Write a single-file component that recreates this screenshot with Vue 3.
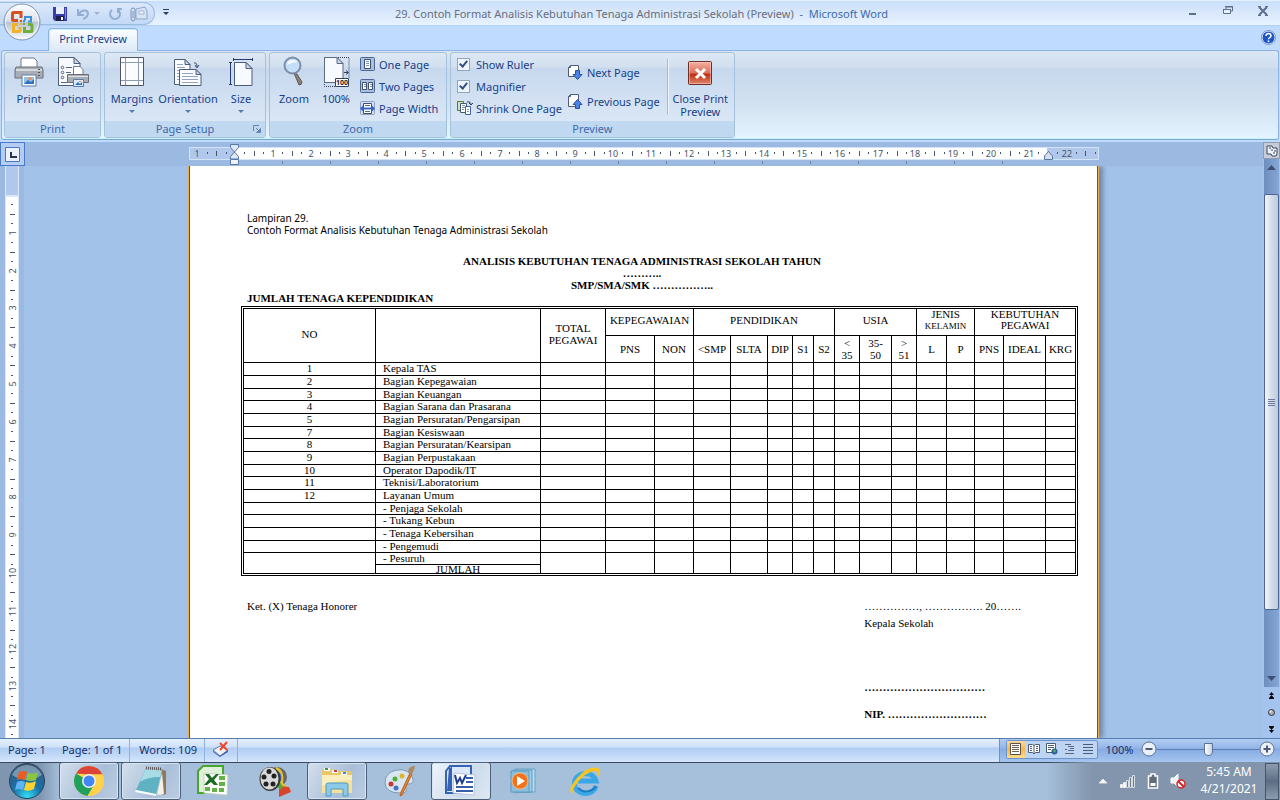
<script setup>
import { ref } from 'vue';

const showRuler = ref(true);
const magnifier = ref(true);
const zoom = ref(100);

const CM = 37.8;

// horizontal ruler: zero sits 46px from its left edge
const hNumbers = [-1, ...Array.from({ length: 22 }, (_, i) => i + 1)].map((n) => ({
  label: Math.abs(n),
  pos: Math.round(46 + n * CM),
}));
const quarter = (from, to, zero) => {
  const list = [];
  for (let q = from; q <= to; q += 1) {
    if (q % 4 !== 0) {
      list.push({ pos: Math.round(zero + (q * CM) / 4), half: q % 2 === 0 });
    }
  }
  return list;
};
const hTicks = quarter(-3, 91, 46);
const tabStops = Array.from({ length: 16 }, (_, i) => 93 + i * 48);

// vertical ruler
const vNumbers = Array.from({ length: 14 }, (_, i) => ({
  label: i + 1,
  pos: Math.round(29 + (i + 1) * CM),
}));
const vTicks = quarter(1, 57, 29);

const columns = [131, 165, 65, 49, 39, 37, 37, 25, 21, 21, 25, 32, 25, 30, 28, 29, 42, 30];

const subHeads = [
  'PNS', 'NON', '<SMP', 'SLTA', 'DIP', 'S1', 'S2', '<\n35', '35-\n50', '>\n51', 'L', 'P', 'PNS', 'IDEAL', 'KRG',
];

const rows = [
  ['1', 'Kepala TAS'],
  ['2', 'Bagian Kepegawaian'],
  ['3', 'Bagian Keuangan'],
  ['4', 'Bagian Sarana dan Prasarana'],
  ['5', 'Bagian Persuratan/Pengarsipan'],
  ['7', 'Bagian Kesiswaan'],
  ['8', 'Bagian Persuratan/Kearsipan'],
  ['9', 'Bagian Perpustakaan'],
  ['10', 'Operator Dapodik/IT'],
  ['11', 'Teknisi/Laboratorium'],
  ['12', 'Layanan Umum'],
  ['', '- Penjaga Sekolah'],
  ['', '- Tukang Kebun'],
  ['', '- Tenaga Kebersihan'],
  ['', '- Pengemudi'],
];
</script>

<template>
  <div class="desktop">
    <header class="titlebar">
      <div class="quick">
        <button class="quick-button" aria-label="Save">
          <svg width="14" height="14" viewBox="0 0 14 14">
            <path d="M0 0h14v14H2L0 12z" fill="#3a3fa8" />
            <path d="M3 0h8v7H3z" fill="#e8effc" />
            <path d="M3 9h8v5H3z" fill="#1d2050" />
            <path d="M8 10h2v3H8z" fill="#fff" />
            <path d="M12 1h1v11h-1z" fill="#7b8ee0" />
          </svg>
        </button>
        <button class="quick-button undo" aria-label="Undo">
          <svg width="24" height="14" viewBox="0 0 24 14">
            <path d="M2 2v6h6M3 7c2-4 8-5 9-1 0 3-2 5-5 6" fill="none" stroke="#93aed3" stroke-width="2" />
            <path d="M18 5h6l-3 3z" fill="#a5b3c7" />
          </svg>
        </button>
        <button class="quick-button" aria-label="Repeat">
          <svg width="14" height="14" viewBox="0 0 14 14">
            <path d="M4 3a5 5 0 1 0 6 0M10 6V2h4" fill="none" stroke="#93aed3" stroke-width="2" />
          </svg>
        </button>
        <button class="quick-button" aria-label="Attach">
          <svg width="18" height="16" viewBox="0 0 18 16">
            <path d="M6 3l9-2 2 4v8H6z" fill="#d7e4f5" stroke="#8da6c7" />
            <path d="M9 5h5v3H9z" fill="#f3f8ff" stroke="#9db3d0" />
            <path d="M1 12V4q0-2 2-2t2 2v9q0 2-2 2t-2-3M3 5v7" fill="none" stroke="#8095b5" />
          </svg>
        </button>
      </div>
      <button class="quick-more" aria-label="Customize Quick Access Toolbar">
        <svg width="6" height="6" viewBox="0 0 6 6">
          <path d="M0 0h6v1H0zM0 3h6L3 6z" fill="#2b3f6b" />
        </svg>
      </button>
      <h1 class="window-title">
        29. Contoh Format Analisis Kebutuhan Tenaga Administrasi Sekolah (Preview)
        <span class="app-name">&nbsp;-&nbsp; Microsoft Word</span>
      </h1>
      <div class="window-buttons">
        <button aria-label="Minimize">
          <svg width="10" height="10" viewBox="0 0 10 10">
            <path d="M1 7h7v2H1z" fill="#5d6f8c" />
          </svg>
        </button>
        <button aria-label="Restore">
          <svg width="10" height="10" viewBox="0 0 10 10">
            <path d="M3 3V1h6.500v4H7" fill="none" stroke="#5d6f8c" />
            <path d="M.5 3.500h7v4h-7z" fill="#e9f2fe" stroke="#5d6f8c" />
            <path d="M0 3h8v1H0zM2 0h8v1H2z" fill="#5d6f8c" />
          </svg>
        </button>
        <button aria-label="Close">
          <svg width="10" height="10" viewBox="0 0 10 10">
            <path d="M1 1l8 8M9 1L1 9" stroke="#5d6f8c" stroke-width="2" />
            <path d="M0 .5h3M7 .5h3M0 9.500h3M7 9.500h3" stroke="#5d6f8c" />
          </svg>
        </button>
      </div>
      <button class="office" aria-label="Office Button">
        <svg width="38" height="38" viewBox="0 0 38 38">
          <defs>
            <linearGradient id="orb" x1="0" y1="0" x2="0" y2="1">
              <stop offset="0" stop-color="#fdfeff" />
              <stop offset=".48" stop-color="#d9e0ea" />
              <stop offset=".5" stop-color="#b6c2d3" />
              <stop offset="1" stop-color="#f8fbff" />
            </linearGradient>
          </defs>
          <circle cx="19" cy="19" r="18" fill="url(#orb)" stroke="#7f93b2" />
          <circle cx="19" cy="19" r="16.500" fill="none" stroke="#fff" opacity=".7" />
          <path d="M18 15V9.500h-7.500q-1 0-1 1v6q0 1 1 1H15" fill="none" stroke="#d8501c" stroke-width="3" />
          <path d="M22 17.500v-3.500h6v4.500h-3" fill="none" stroke="#3f8fd6" stroke-width="2" />
          <path d="M15 21.500h-4.500v7H16q1 0 1-1V24" fill="none" stroke="#f0b323" stroke-width="3" />
          <path d="M21.500 24v4.500h6.500q1 0 1-1v-5q0-1-1-1h-3" fill="none" stroke="#6fae3b" stroke-width="3" />
          <path d="M17 17h2v2h-2z" fill="#d8501c" />
          <path d="M20 17h2v2h-2z" fill="#3f8fd6" />
          <path d="M17 20h2v2h-2z" fill="#f0b323" />
          <path d="M20 20h2v2h-2z" fill="#6fae3b" />
        </svg>
      </button>
    </header>

    <nav class="tabs">
      <button class="tab">Print Preview</button>
      <button class="help" aria-label="Help">
        <svg width="15" height="15" viewBox="0 0 15 15">
          <circle cx="7.500" cy="7.500" r="6.500" fill="#1c57c9" stroke="#fff" />
          <circle cx="7.500" cy="7.500" r="7" fill="none" stroke="#6d8fc9" />
          <path d="M5 6q0-2.500 2.500-2.500T10 6q0 1-1.500 1.800-1 .5-1 1.500" fill="none" stroke="#fff" stroke-width="1.500" />
          <path d="M6.700 10.500h1.600V12H6.700z" fill="#fff" />
        </svg>
      </button>
    </nav>

    <div class="ribbon">
      <section class="group print">
        <div class="tools">
          <button class="big">
            <svg width="32" height="32" viewBox="0 0 32 32">
              <path d="M9 2h12l3 3v9H8V3z" fill="#fff" stroke="#6b7a90" />
              <path d="M3 11h26l1 3v8H2v-8z" fill="#a9adb5" stroke="#6c6f77" />
              <path d="M3 13h26v2H3z" fill="#d6d9de" />
              <path d="M25 13h2v1h-2zM25 16h2v1h-2zM25 19h2v1h-2z" fill="#555" />
              <path d="M9 19h14v11H9z" fill="#fff" stroke="#5b7ba8" />
              <path d="M11 21h10v7H11z" fill="#8fc0f0" />
              <path d="M11 28l4-4 3 2 3-3v5z" fill="#2f70c0" />
              <circle cx="17" cy="22.500" r="1.500" fill="#f08a3c" />
            </svg>
            <span>Print</span>
          </button>
          <button class="big">
            <svg width="32" height="32" viewBox="0 0 32 32">
              <path d="M1.500 1.500H17l6 6v22H1.500z" fill="#f7faff" stroke="#4d5d78" />
              <path d="M17 1.500v6h6z" fill="#cdd9ea" stroke="#4d5d78" />
              <g fill="none" stroke="#55637c">
                <circle cx="5.500" cy="11.500" r="1.300" />
                <circle cx="5.500" cy="16.500" r="1.300" />
                <circle cx="5.500" cy="21.500" r="1.300" />
                <path d="M9 11.500h6M9 16.500h5M4 26.500h6" />
              </g>
              <path d="M16.500 10.500H23l3 3v6h-9.500z" fill="#fff" stroke="#6b7a90" />
              <path d="M10.500 18.500h21v8h-21z" fill="#a9adb5" stroke="#6c6f77" />
              <path d="M11 20h20v1H11z" fill="#dfe2e6" />
              <path d="M16.500 23.500h10v7h-10z" fill="#dbeafd" stroke="#5b7ba8" />
              <path d="M18 29l3-3 2 2 2-2v3z" fill="#2f70c0" />
              <path d="M22 25h2v1h-2z" fill="#f08a3c" />
            </svg>
            <span>Options</span>
          </button>
        </div>
        <h2>Print</h2>
      </section>

      <section class="group">
        <div class="tools">
          <button class="big margins">
            <svg width="32" height="32" viewBox="0 0 32 32">
              <path d="M4.500 1.500h23v28h-23z" fill="#fafcff" stroke="#4f5560" />
              <path d="M9.500 2v27M22.500 2v27M5 6.500h22M5 24.500h22" stroke="#8c9bb2" />
            </svg>
            <span>Margins</span>
            <i class="arrow"></i>
          </button>
          <button class="big orientation">
            <svg width="32" height="32" viewBox="0 0 32 32">
              <path d="M2.500 3.500H13l5 5v20H2.500z" fill="#fafcff" stroke="#4d5d78" />
              <path d="M13 3.500v5h5z" fill="#cdd9ea" stroke="#4d5d78" />
              <path d="M5 8.500h6M5 11.500h8M5 14.500h4M5 17.500h3M5 20.500h3M5 23.500h3" stroke="#8fa4c6" />
              <path d="M7.500 13.500H24l5 5v11H7.500z" fill="#fafcff" stroke="#4d5d78" />
              <path d="M24 13.500v5h5z" fill="#cdd9ea" stroke="#4d5d78" />
              <path d="M10 17.500h11M10 20.500h16M10 23.500h16M10 26.500h16" stroke="#8fa4c6" />
              <path d="M22 7q3-1 3 4M23 9l2 3 2-3" fill="none" stroke="#3c4b6e" />
            </svg>
            <span>Orientation</span>
            <i class="arrow"></i>
          </button>
          <button class="big">
            <svg width="32" height="32" viewBox="0 0 32 32">
              <path d="M9.500 6.500H21l6 6v17H9.500z" fill="#f7faff" stroke="#4d5d78" />
              <path d="M21 6.500v6h6z" fill="#cdd9ea" stroke="#4d5d78" />
              <path d="M9 3.500h18M8.500 2v3M27.500 2v3M5.500 7v21M4 6.500h3M4 28.500h3" stroke="#27377c" />
            </svg>
            <span>Size</span>
            <i class="arrow"></i>
          </button>
        </div>
        <h2>
          Page Setup
          <button class="launcher" aria-label="Page Setup dialog">
            <svg width="8" height="8" viewBox="0 0 8 8">
              <path d="M.5 6V.5H6" fill="none" stroke="#6785b3" />
              <path d="M3 3l3 3M7.500 3.500v4h-4z" fill="#6785b3" stroke="#6785b3" />
            </svg>
          </button>
        </h2>
      </section>

      <section class="group">
        <div class="tools">
          <button class="big">
            <svg width="32" height="32" viewBox="0 0 32 32">
              <path d="M16 17l3 1 5 8q0 3-3 3z" fill="#8a8078" stroke="#5f5a58" />
              <circle cx="14.500" cy="9.500" r="8" fill="#c5def7" stroke="#7c8da5" stroke-width="2" />
              <path d="M9 9q0-5 6-5 3 0 5 2-6 0-11 3z" fill="#f3f9ff" />
            </svg>
            <span>Zoom</span>
          </button>
          <button class="big hundred">
            <svg width="32" height="32" viewBox="0 0 32 32">
              <path d="M4 1.500h25V22M4.500 2v28.500H15" fill="none" stroke="#33415e" stroke-dasharray="1 1" />
              <path d="M4.500 1.500H17l6 6v19H4.500z" fill="#f7faff" stroke="#5c6b84" />
              <path d="M17 1.500v6h6z" fill="#cdd9ea" stroke="#5c6b84" />
              <path d="M24 16.500h4M26 14.500l2.500 2-2.500 2" fill="none" stroke="#33415e" />
              <path d="M15.500 22.500h13v8h-13z" fill="#fff" stroke="#33415e" />
              <text x="16" y="29" font-size="7" font-weight="bold" fill="#222">100</text>
            </svg>
            <span>100%</span>
          </button>
          <div class="stack pages">
            <button class="small">
              <svg width="16" height="16" viewBox="0 0 16 16">
                <rect x=".5" y="1.500" width="14" height="13" rx="1" fill="#a9c0e0" stroke="#4d6690" />
                <path d="M4.500 3.500h6v9h-6z" fill="#fff" stroke="#3e5175" />
                <path d="M6 5.500h3M6 7.500h3M6 9.500h3" stroke="#7d92b6" />
              </svg>
              <span>One Page</span>
            </button>
            <button class="small">
              <svg width="16" height="16" viewBox="0 0 16 16">
                <rect x=".5" y="1.500" width="14" height="13" rx="1" fill="#a9c0e0" stroke="#4d6690" />
                <path d="M2.500 4.500h4v7h-4zM8.500 4.500h4v7h-4z" fill="#fff" stroke="#3e5175" />
                <path d="M4 6.500h2M4 8.500h2M10 6.500h2M10 8.500h2" stroke="#7d92b6" />
              </svg>
              <span>Two Pages</span>
            </button>
            <button class="small">
              <svg width="16" height="16" viewBox="0 0 16 16">
                <rect x=".5" y="1.500" width="14" height="13" rx="1" fill="#d3dfef" stroke="#8ba0c1" />
                <path d="M3.500 3.500h8v10h-8z" fill="#fff" stroke="#3e5175" />
                <path d="M5 5.500h5M5 11.500h5" stroke="#55678a" />
                <path d="M0 8.500l3-3v2h9v-2l3 3-3 3v-2H3v2z" fill="#3566c8" />
              </svg>
              <span>Page Width</span>
            </button>
          </div>
        </div>
        <h2>Zoom</h2>
      </section>

      <section class="group">
        <div class="tools">
          <div class="stack options">
            <label class="small"><input v-model="showRuler" type="checkbox" /><span>Show Ruler</span></label>
            <label class="small"><input v-model="magnifier" type="checkbox" /><span>Magnifier</span></label>
            <button class="small">
              <svg width="16" height="16" viewBox="0 0 16 16">
                <path d="M.5 1.500h6v9h-6z" fill="#cfe3c2" stroke="#4e7d35" />
                <path d="M3.500 3.500h6v9h-6z" fill="#fff" stroke="#44577c" />
                <path d="M5 5.500h3M5 7.500h3M5 9.500h2" stroke="#7d92b6" />
                <path d="M8.500 6.500h5v8h-5z" fill="#fff" stroke="#3e66a8" />
                <path d="M10 9.500h2M10 11.500h2" stroke="#7d92b6" />
                <path d="M10 2q4-1 4 3M12 3l2 2 2-2" fill="none" stroke="#333f5c" />
              </svg>
              <span>Shrink One Page</span>
            </button>
          </div>
          <div class="stack turn">
            <button class="small">
              <svg width="16" height="16" viewBox="0 0 16 16">
                <path d="M3.500 1.500h8v11h-10v-9z" fill="#fff" stroke="#4d5d78" />
                <path d="M3.500 1.500v2h-2" fill="none" stroke="#4d5d78" />
                <path d="M8.500 6.500h4v4h2.500L10.500 15.500 6 10.500h2.500z" fill="#4c83e8" stroke="#2450a6" />
              </svg>
              <span>Next Page</span>
            </button>
            <button class="small">
              <svg width="16" height="16" viewBox="0 0 16 16">
                <path d="M3.500 1.500h8v12h-10v-10z" fill="#fff" stroke="#4d5d78" />
                <path d="M3.500 1.500v2h-2" fill="none" stroke="#4d5d78" />
                <path d="M8.500 15.500h4v-4h2.500L10.500 6.500 6 11.500h2.500z" fill="#4c83e8" stroke="#2450a6" />
              </svg>
              <span>Previous Page</span>
            </button>
          </div>
          <div class="divider"></div>
          <button class="big close">
            <svg width="32" height="32" viewBox="0 0 32 32">
              <defs>
                <linearGradient id="red" x1="0" y1="0" x2="0" y2="1">
                  <stop offset="0" stop-color="#f4b3a4" />
                  <stop offset=".5" stop-color="#dc6f5b" />
                  <stop offset=".55" stop-color="#c02d12" />
                  <stop offset="1" stop-color="#e08a70" />
                </linearGradient>
              </defs>
              <rect x="4.500" y="5.500" width="23" height="23" rx="1" fill="url(#red)" stroke="#6b2f28" />
              <rect x="5.500" y="6.500" width="21" height="21" fill="none" stroke="#f7c9be" opacity=".6" />
              <path d="M12 13l9 9M21 13l-9 9" stroke="#fff" stroke-width="3" />
            </svg>
            <span>Close Print<br />Preview</span>
          </button>
        </div>
        <h2>Preview</h2>
      </section>
    </div>

    <main class="workspace">
      <div class="view">
        <div class="ruler-row">
          <button class="tab-selector" aria-label="Left Tab">
            <svg width="15" height="15" viewBox="0 0 15 15">
              <path d="M.5.5h14v14H.5z" fill="#eaf1fb" stroke="#4a78c8" />
              <path d="M5 5h2v4h5v2H5z" fill="#29344c" />
            </svg>
          </button>
          <div class="ruler-center">
            <svg v-if="showRuler" class="h-ruler" width="910" height="20" viewBox="0 0 910 20">
              <path d="M.5.5h909v12H.5z" fill="#b0c8ec" stroke="#d4e4f8" />
              <path d="M46 1h812v11H46z" fill="#fff" />
              <text v-for="n in hNumbers" :key="n.pos" :x="n.pos" y="10" text-anchor="middle">{{ n.label }}</text>
              <rect
                v-for="t in hTicks"
                :key="t.pos"
                :x="t.pos"
                :y="t.half ? 4 : 5"
                width="1"
                :height="t.half ? 5 : 2"
                fill="#4a5468"
              />
              <rect v-for="s in tabStops" :key="s" :x="s" y="14" width="1" height="3" fill="#7a8590" />
              <path d="M41.500-2.500h8v3l-4 4.500-4-4.500zM41.500 12v-2.500l4-4.500 4 4.500V12z" fill="#dfe7f2" stroke="#5678aa" />
              <path d="M41.500 12.500h8v5h-8z" fill="#eef3fa" stroke="#5678aa" />
              <path d="M855.500 12.500V9l4-4.500 4 4.500v3.500z" fill="#d5dfec" stroke="#5678aa" />
            </svg>
          </div>
        </div>
        <div class="canvas">
          <svg class="v-ruler" width="24" height="572" viewBox="0 0 24 572">
            <path d="M0 0h24v572H0z" fill="#9bb9e1" />
            <path d="M5 0h14v572H5z" fill="#dbe7f7" />
            <path d="M6 0h12v29H6z" fill="#b0c8ec" />
            <path d="M6 31h12v541H6z" fill="#fff" />
            <text
              v-for="n in vNumbers"
              :key="n.pos"
              text-anchor="middle"
              :transform="`translate(16 ${n.pos}) rotate(-90)`"
            >
              {{ n.label }}
            </text>
            <rect
              v-for="t in vTicks"
              :key="t.pos"
              :x="t.half ? 10 : 11"
              :y="t.pos"
              :width="t.half ? 5 : 2"
              height="1"
              fill="#4a5468"
            />
          </svg>
          <div class="page-center">
            <article class="page">
              <p class="note">Lampiran 29.<br />Contoh Format Analisis Kebutuhan Tenaga Administrasi Sekolah</p>
              <h3 class="heading">
                ANALISIS KEBUTUHAN TENAGA ADMINISTRASI SEKOLAH TAHUN<br />………..<br />SMP/SMA/SMK ……………..
              </h3>
              <h4 class="subheading">JUMLAH TENAGA KEPENDIDIKAN</h4>
              <table>
                <colgroup>
                  <col v-for="(w, i) in columns" :key="i" :style="{ width: w + 'px' }" />
                </colgroup>
                <thead>
                  <tr>
                    <th rowspan="2">NO</th>
                    <th rowspan="2"></th>
                    <th rowspan="2">TOTAL PEGAWAI</th>
                    <th colspan="2">KEPEGAWAIAN</th>
                    <th colspan="5">PENDIDIKAN</th>
                    <th colspan="3">USIA</th>
                    <th colspan="2" class="two-line">JENIS<br /><small>KELAMIN</small></th>
                    <th colspan="3" class="two-line">KEBUTUHAN<br />PEGAWAI</th>
                  </tr>
                  <tr>
                    <th v-for="(s, i) in subHeads" :key="i" class="sub">{{ s }}</th>
                  </tr>
                </thead>
                <tbody>
                  <tr v-for="row in rows" :key="row[1]">
                    <td>{{ row[0] }}</td>
                    <td class="label">{{ row[1] }}</td>
                    <td v-for="n in 16" :key="n"></td>
                  </tr>
                  <tr class="last">
                    <td rowspan="2"></td>
                    <td class="label">- Pesuruh</td>
                    <td v-for="n in 16" :key="n" rowspan="2"></td>
                  </tr>
                  <tr class="total">
                    <td>JUMLAH</td>
                  </tr>
                </tbody>
              </table>
              <div class="foot">
                <p>Ket. (X) Tenaga Honorer</p>
                <div class="sign">
                  <p>……………, ……………. 20…….</p>
                  <p>Kepala Sekolah</p>
                  <p class="name">……………………………</p>
                  <p class="nip">NIP. ………………………</p>
                </div>
              </div>
            </article>
          </div>
        </div>
      </div>

      <aside class="scroll">
        <button class="ruler-toggle" aria-label="View Ruler">
          <svg width="12" height="12" viewBox="0 0 12 12">
            <path d="M1 3V1h5l1 2h4v6l-1 2H6L5 9H1z" fill="#eef2f8" stroke="#3b4760" />
            <path d="M3 3h2M5 5h2M8 6h2M7 8h2" stroke="#3b4760" />
          </svg>
        </button>
        <div class="track">
          <button class="step" aria-label="Scroll up">
            <svg width="9" height="5" viewBox="0 0 9 5"><path d="M0 5l4.500-5L9 5z" fill="#3e4f73" /></svg>
          </button>
          <div class="thumb"><i></i></div>
          <button class="step" aria-label="Scroll down">
            <svg width="9" height="5" viewBox="0 0 9 5"><path d="M0 0l4.500 5L9 0z" fill="#3e4f73" /></svg>
          </button>
        </div>
        <div class="browse">
          <button aria-label="Previous Page">
            <svg width="7" height="7" viewBox="0 0 7 7"><path d="M3.500 0L6 3H1zM3.500 3L6 6H1zM1 6h5v1H1z" /></svg>
          </button>
          <button aria-label="Select Browse Object">
            <svg width="7" height="7" viewBox="0 0 7 7">
              <circle cx="3.500" cy="3.500" r="3" fill="#a9acb3" stroke="#333" />
              <circle cx="2.500" cy="2.500" r="1" fill="#fff" />
            </svg>
          </button>
          <button aria-label="Next Page">
            <svg width="7" height="7" viewBox="0 0 7 7"><path d="M1 0h5v1H1zM1 1h5L3.500 4zM1 4h5L3.500 7z" /></svg>
          </button>
        </div>
      </aside>
    </main>

    <footer class="status">
      <span class="cell">Page: 1</span>
      <span class="cell pages-count">Page: 1 of 1</span>
      <span class="cell words">Words: 109</span>
      <button class="cell proof" aria-label="Proofing errors">
        <svg width="17" height="16" viewBox="0 0 17 16">
          <path d="M1 9l7-4 8 4-8 6z" fill="#eef3fb" stroke="#5b78b0" />
          <path d="M1 10l7 5 8-6v2l-8 5-7-5z" fill="#3f63b5" />
          <path d="M8 2l7 7M15 1L8 9" stroke="#f0482a" stroke-width="2" />
        </svg>
      </button>
      <div class="status-right">
        <div class="views">
          <button class="active" aria-label="Print Layout">
            <svg width="12" height="12" viewBox="0 0 12 12">
              <path d="M.5.5h10v11H.5z" fill="#fff" stroke="#5d5340" />
              <path d="M2 2.500h7M2 4.500h7M2 6.500h7M2 8.500h7" stroke="#6d6350" />
            </svg>
          </button>
          <button aria-label="Full Screen Reading">
            <svg width="12" height="12" viewBox="0 0 12 12">
              <path d="M.5 1.500h4l1.500 1 1.500-1h4v8h-4L6 11l-1.500-1.500h-4z" fill="#fff" stroke="#4b5a75" />
              <path d="M6 2v9M2 3.500h2M2 5.500h2M2 7.500h2M8 3.500h2M8 5.500h2M8 7.500h2" stroke="#4b5a75" />
            </svg>
          </button>
          <button aria-label="Web Layout">
            <svg width="12" height="12" viewBox="0 0 12 12">
              <path d="M.5.5h9v9h-9z" fill="#fff" stroke="#4b5a75" />
              <path d="M2 2.500h6M2 4.500h6M2 6.500h3" stroke="#4b5a75" />
              <circle cx="8.500" cy="8.500" r="3" fill="#2f5f9a" />
              <path d="M7 8q2-3 3 0-1 3-3 0z" fill="#59b05a" />
            </svg>
          </button>
          <button aria-label="Outline">
            <svg width="12" height="12" viewBox="0 0 12 12">
              <path d="M1 1.500h6M4 3.500h6M6 5.500h4M4 7.500h6M1 10.500h9M1 6.500h2" stroke="#5a6a86" />
            </svg>
          </button>
          <button aria-label="Draft">
            <svg width="12" height="12" viewBox="0 0 12 12">
              <path d="M1 1.500h10M1 4.500h10M1 7.500h10M1 10.500h10" stroke="#4b5a75" />
            </svg>
          </button>
        </div>
        <button class="percent">{{ zoom }}%</button>
        <button class="round" aria-label="Zoom out">
          <svg width="16" height="16" viewBox="0 0 16 16">
            <circle cx="8" cy="8" r="7" fill="#e9f0fa" stroke="#5f7392" />
            <path d="M4.500 7h7v2h-7z" fill="#4c5a72" />
          </svg>
        </button>
        <input v-model="zoom" class="zoom-slider" type="range" min="0" max="200" aria-label="Zoom" />
        <button class="round" aria-label="Zoom in">
          <svg width="16" height="16" viewBox="0 0 16 16">
            <circle cx="8" cy="8" r="7" fill="#e9f0fa" stroke="#5f7392" />
            <path d="M4.500 7h7v2h-7zM7 4.500h2v7H7z" fill="#4c5a72" />
          </svg>
        </button>
      </div>
    </footer>

    <div class="taskbar">
      <button class="start" aria-label="Start">
        <svg width="38" height="38" viewBox="0 0 38 38">
          <defs>
            <radialGradient id="start" cx=".5" cy=".95" r=".9">
              <stop offset="0" stop-color="#35e0f5" />
              <stop offset=".45" stop-color="#1673ab" />
              <stop offset="1" stop-color="#3d5876" />
            </radialGradient>
          </defs>
          <circle cx="19" cy="19" r="17.500" fill="url(#start)" stroke="#27435f" />
          <path d="M4 13Q9 3 19 3t15 10q-8 5-15 5T4 13z" fill="#c8dbe9" opacity=".45" />
          <path d="M11 10q4-2 8 0l-2 8q-4-2-8 0z" fill="#ee5a24" />
          <path d="M20 11q5 2 10-1l-2 8q-5 2-10 0z" fill="#8cc63f" />
          <path d="M9 20q4-2 8 0l-2 8q-4-2-8 0z" fill="#5fb4f5" />
          <path d="M18 20q5 2 10-1l-2 8q-5 3-10 1z" fill="#fdd22e" />
        </svg>
      </button>
      <button class="task open" aria-label="Google Chrome">
        <svg width="32" height="32" viewBox="0 0 32 32">
          <circle cx="16" cy="16" r="15" fill="#fdd24a" />
          <path d="M3 8.500A15 15 0 0 1 29.500 9.500H16z" fill="#db4437" />
          <path d="M3 8.500A15 15 0 0 0 14.500 30.900L21 20l-5-4z" fill="#1fa15d" />
          <path d="M16 9.500h13.500a15 15 0 0 1-15 21.400l7-11z" fill="#fdd24a" />
          <circle cx="16" cy="16" r="7" fill="#f2f2f2" />
          <circle cx="16" cy="16" r="5.500" fill="#4285f4" />
        </svg>
      </button>
      <button class="task open" aria-label="Notepad">
        <svg width="32" height="32" viewBox="0 0 32 32">
          <path d="M26 4l5 2v23l-3 1z" fill="#8d7a5c" />
          <path d="M27 8l2 21-7 1z" fill="#f4f0e4" />
          <path d="M11 3l16 2-6 24L1 25z" fill="#5fb2c2" />
          <path d="M11 3l16 2-2 7Q12 12 5 17z" fill="#a9dce5" />
          <path d="M1 25l20 4v2L0 27z" fill="#f5fbfc" />
          <path d="M11 3l16 1" stroke="#5b5b5b" stroke-width="3" stroke-dasharray="1 1" />
        </svg>
      </button>
      <button class="task" aria-label="Excel">
        <svg width="32" height="32" viewBox="0 0 32 32">
          <path d="M6 1h20v27H1V6z" fill="#dff0d8" stroke="#4aa52f" stroke-width="2" />
          <path d="M7 8l24 2-1 20-23-2z" fill="#fdfefb" stroke="#c6d6bf" />
          <path d="M22 11h6v4h-6zM22 17h6v4h-6zM22 23h5v4h-5zM15 23h5v4h-5zM8 22h5v4H8z" fill="#66b24a" />
          <path d="M8 9h4l3 4 4-4h3l-5 6 4 5h-4l-3-3-4 3H7l5-6z" fill="#1e6a26" />
        </svg>
      </button>
      <button class="task" aria-label="Movie Maker">
        <svg width="32" height="32" viewBox="0 0 32 32">
          <circle cx="18" cy="12" r="10" fill="#666" />
          <path d="M17 2q9 2 7 16l4 4-6 4-7-12z" fill="#e2c22f" />
          <path d="M16 5q8 2 6 11l-4 1z" fill="#3a66c8" />
          <path d="M20 21l10 1 2 5-12 5z" fill="#d8432a" />
          <path d="M19 14l5 8-3 3-4-6z" fill="#52a839" />
          <ellipse cx="11" cy="14" rx="10.500" ry="12" fill="#3b3b3b" />
          <ellipse cx="10.500" cy="13.500" rx="9" ry="11" fill="#d9d9d9" />
          <g fill="#222">
            <circle cx="10" cy="6.500" r="2.500" />
            <circle cx="5" cy="12" r="2.500" />
            <circle cx="15" cy="11" r="2.500" />
            <circle cx="7" cy="19" r="2.500" />
            <circle cx="14" cy="19" r="2.500" />
          </g>
        </svg>
      </button>
      <button class="task open" aria-label="Windows Explorer">
        <svg width="32" height="32" viewBox="0 0 32 32">
          <path d="M1 6q0-2 2-2h8l2 2h16q2 0 2 2v20H1z" fill="#e8c76b" />
          <path d="M3 3h6v3H3zM11 5h6v3h-6zM20 7h6v3h-6z" fill="#fff" />
          <path d="M4 3h3v2H4z" fill="#3c9a3a" />
          <path d="M13 5h3v2h-3z" fill="#d6402b" />
          <path d="M22 7h3v2h-3z" fill="#3a8fd0" />
          <path d="M1 10h30v18H1z" fill="#f6e09a" />
          <path d="M1 10h30v5q-16 0-30 6z" fill="#fbeebd" />
          <path d="M5 31V20q0-2 2-2h18q2 0 2 2v11h-5v-7H10v7z" fill="#8cc9e6" stroke="#4e9cc4" />
        </svg>
      </button>
      <button class="task" aria-label="Paint">
        <svg width="32" height="32" viewBox="0 0 32 32">
          <path d="M2 18Q2 7 14 5t16 9q1 5-5 5-4 1-2 5t-6 4Q3 28 2 18z" fill="#d8e6f2" stroke="#7c9ab8" />
          <circle cx="8" cy="19" r="2.500" fill="#c8382f" />
          <circle cx="12" cy="14" r="2.500" fill="#51ac3c" />
          <circle cx="19" cy="11" r="2.500" fill="#e3b32c" />
          <circle cx="13" cy="23" r="2.500" fill="#3e74cc" />
          <path d="M27 8l2 1-10 21-2 1 1-4z" fill="#e3873a" stroke="#b9601e" />
          <path d="M25 6q1-5 7-5-1 6-4 9z" fill="#ad8a60" />
        </svg>
      </button>
      <button class="task open current" aria-label="Microsoft Word">
        <svg width="32" height="32" viewBox="0 0 32 32">
          <path d="M5 1h21v27H1V6z" fill="#dbe8fa" stroke="#3564b4" stroke-width="2" />
          <path d="M4 3l3-1v24H2z" fill="#3564b4" />
          <path d="M9 8l21 2-1 20-21-2z" fill="#fff" stroke="#b6c6df" />
          <path d="M21 12h7v2h-7zM21 16h7v2h-7zM11 21h17v2H11zM11 25h17v2H11z" fill="#3a5ea6" />
          <path d="M10 10l2 8 3-5 2 5 4-8" fill="none" stroke="#1f3f8a" stroke-width="2" />
        </svg>
      </button>
      <button class="task" aria-label="Media Player">
        <svg width="32" height="32" viewBox="0 0 32 32">
          <path d="M8 4h20v23H8z" fill="#b9dbee" stroke="#6ba3c6" />
          <path d="M6 5h19v22H6z" fill="#a1cde6" stroke="#5b9ac0" />
          <path d="M4 6h18v21H4z" fill="#8bbfdd" stroke="#5b9ac0" />
          <circle cx="13" cy="16" r="8" fill="#f0731c" stroke="#fbb37a" />
          <path d="M10 11l8 5-8 5z" fill="#fff" />
        </svg>
      </button>
      <button class="task" aria-label="Internet Explorer">
        <svg width="32" height="32" viewBox="0 0 32 32">
          <path d="M27 21a11 10 0 1 1 0-5H9" fill="none" stroke="#3aa8e6" stroke-width="5" />
          <path d="M27 21a11 10 0 0 1-18 2" fill="none" stroke="#1c7cc4" stroke-width="2" />
          <path d="M4 29Q-3 26 8 13T29 3q4 2 0 9 1-6-4-6-9 2-16 11T4 29z" fill="#f7c51e" />
        </svg>
      </button>
      <div class="tray">
        <button aria-label="Show hidden icons">
          <svg width="10" height="6" viewBox="0 0 10 6"><path d="M1 5l4-4 4 4z" fill="#fff" stroke="#dfe6ee" /></svg>
        </button>
        <button aria-label="Network">
          <svg width="16" height="14" viewBox="0 0 16 14">
            <path d="M.5 10.500h2v3h-2zM3.500 8.500h2v5h-2z" fill="#fff" stroke="#eee" />
            <path d="M6.500 6.500h2v7h-2zM9.500 3.500h2v10h-2zM12.500 1.500h2v12h-2z" fill="#6e7c8e" stroke="#d8dee6" />
          </svg>
        </button>
        <button aria-label="Battery">
          <svg width="12" height="16" viewBox="0 0 12 16">
            <path d="M4 1h4v2h2.500v12h-9V3H4z" fill="#5f6c7c" stroke="#fff" stroke-width="1.500" />
            <path d="M3.500 10h5v3h-5z" fill="#fff" />
          </svg>
        </button>
        <button aria-label="Volume">
          <svg width="16" height="16" viewBox="0 0 16 16">
            <path d="M1 5h3l4-4v13l-4-4H1z" fill="#eef1f5" stroke="#fff" />
            <circle cx="11" cy="11" r="4" fill="#fff" stroke="#d81f1f" stroke-width="1.500" />
            <path d="M8 8l6 6" stroke="#d81f1f" stroke-width="2" />
          </svg>
        </button>
        <time class="clock">5:45 AM<br />4/21/2021</time>
        <button class="show-desktop" aria-label="Show desktop"></button>
      </div>
    </div>
  </div>
</template>

<style>
body {
  margin: 0;
  overflow: hidden;
}
</style>

<style scoped>
.desktop {
  display: flex;
  flex-direction: column;
  height: 100vh;
  font-family: 'Noto Sans', 'Open Sans', sans-serif;
  font-size: 11px;
  line-height: 13px;
  color: #15428b;
  background: #bfdbff;
}

button {
  font: inherit;
  color: inherit;
  background: none;
  border: 0;
  padding: 0;
  display: flex;
  align-items: center;
  justify-content: center;
}

h1,
h2,
h3,
h4,
p {
  margin: 0;
  font-size: inherit;
  font-weight: normal;
}

svg {
  display: block;
  flex: none;
}

/* title bar */
.titlebar {
  position: relative;
  display: grid;
  grid-template-columns: 157px 18px 1fr 105px;
  height: 26px;
  box-sizing: border-box;
  border-top: 1px solid #e6f0fc;
  border-bottom: 1px solid #b0d0f7;
  background: linear-gradient(#cadff9, #dceafc 60%, #e8f3ff);
}

.quick {
  display: flex;
  align-items: center;
  gap: 8px;
  margin: 1px 2px 0 0;
  padding-left: 53px;
  height: 21px;
  border: 1px solid #9fbbe0;
  border-left: 0;
  border-radius: 0 12px 12px 0;
  background: linear-gradient(#dbe8fa, #c3d9f6);
}

.undo {
  margin-left: 1px;
}

.quick-more {
  height: 22px;
}

.window-title {
  align-self: center;
  padding-right: 67px;
  text-align: center;
  white-space: nowrap;
  color: #696e7c;
}

.app-name {
  color: #3e6aaa;
}

.window-buttons {
  display: flex;
  height: 20px;
}

.window-buttons button {
  width: 35px;
}

.office {
  position: absolute;
  left: 3px;
  top: 2px;
  z-index: 2;
}

/* tabs */
.tabs {
  display: flex;
  justify-content: space-between;
  height: 24px;
  flex: none;
  padding: 2px 4px 0 48px;
  box-sizing: border-box;
  background: #bfdbff;
}

.tab {
  width: 90px;
  height: 23px;
  padding-bottom: 3px;
  z-index: 1;
  border: 1px solid #8db2e3;
  border-bottom: 0;
  border-radius: 4px 4px 0 0;
  background: linear-gradient(#fbfdff, #dde9f7);
  box-shadow: inset 1px 1px #c5eef8;
}

.help {
  height: 18px;
}

/* ribbon */
.ribbon {
  display: flex;
  flex: none;
  gap: 3px;
  margin: 0 1px 2px;
  padding: 1px 2px;
  border: 1px solid #8db2e3;
  border-bottom-color: #7fa8c8;
  border-radius: 3px;
  background: linear-gradient(#dae6f4, #cfdded 17px, #c7d8ed 18px, #d3e2f1 55px, #e3f4ff 86px);
  box-shadow: inset 0 -1px #c4f5ff;
}

.group {
  display: flex;
  flex-direction: column;
  border: 1px solid #a5c2dc;
  border-radius: 3px;
  background: linear-gradient(#dee8f5, #d1dfee 14px, #c7d8ee 15px, #d9e6f5 66px);
}

.tools {
  display: flex;
  height: 68px;
  padding: 0 2px;
}

.print .tools {
  padding: 0 5px 0 2px;
}

.group h2 {
  display: flex;
  justify-content: center;
  position: relative;
  height: 16px;
  line-height: 16px;
  color: #3e6aaa;
  background: #c1d8f1;
}

.launcher {
  position: absolute;
  right: 4px;
  top: 4px;
}

.big {
  flex-direction: column;
  justify-content: flex-start;
  width: 44px;
  padding-top: 3px;
}

.big span {
  margin-top: 4px;
}

.margins {
  width: 50px;
}

.orientation {
  width: 62px;
}

.hundred {
  width: 40px;
}

.close {
  width: 63px;
}

.arrow {
  margin-top: 5px;
  border: 3px solid transparent;
  border-top-color: #567db1;
  border-bottom: 0;
}

.stack {
  display: flex;
  flex-direction: column;
}

.small {
  display: flex;
  align-items: center;
  justify-content: flex-start;
  gap: 3px;
  height: 22px;
  white-space: nowrap;
}

.pages {
  padding-left: 4px;
  width: 84px;
}

.options {
  width: 110px;
  padding-left: 4px;
}

.options label {
  gap: 6px;
}

.options input {
  appearance: none;
  display: flex;
  justify-content: center;
  width: 13px;
  height: 13px;
  box-sizing: border-box;
  margin: 0;
  border: 1px solid #8ea6c4;
  background: #eef4fc;
}

.options input:checked::after {
  content: '';
  width: 3px;
  height: 6px;
  border: solid #33507f;
  border-width: 0 2px 2px 0;
  transform: rotate(40deg);
}

.turn {
  padding: 8px 7px 0 0;
  gap: 7px;
}

.turn .small {
  gap: 4px;
}

.divider {
  width: 1px;
  margin: 6px 0;
  background: #9cb9df;
  border-right: 1px solid #eef5fd;
}

/* workspace */
.workspace {
  flex: 1;
  display: flex;
  min-height: 0;
  background: #a3c2ea;
}

.view {
  flex: 1;
  display: flex;
  flex-direction: column;
  min-width: 0;
}

.ruler-row {
  display: flex;
  height: 24px;
  flex: none;
  background: #9bb9e1;
}

.tab-selector {
  width: 25px;
  box-sizing: border-box;
  border: 1px solid #4a78c8;
  background: #b5cdf0;
}

.ruler-center,
.page-center {
  flex: 1;
  display: flex;
  justify-content: center;
  min-width: 0;
}

.h-ruler {
  margin-top: 5px;
  overflow: visible;
}

.h-ruler text,
.v-ruler text {
  font-size: 9px;
  fill: #4a5468;
}

.canvas {
  flex: 1;
  display: flex;
  min-height: 0;
  overflow: hidden;
}

.page {
  flex: 1;
  max-width: 911px;
  box-sizing: border-box;
  padding: 46px 21px 0 58px;
  border: 1px solid #f0ad4e;
  border-width: 0 1px;
  background: #fff;
  box-shadow: inset 1px 0 #555, inset -1px 0 #555, 4px 0 5px #6d86a8;
  color: #000;
  font-family: 'Liberation Serif', serif;
  font-size: 11px;
  line-height: 12px;
}

.note {
  font-family: 'Noto Sans', sans-serif;
  font-size: 10px;
}

.heading,
.subheading {
  font-weight: bold;
}

.heading {
  margin-top: 19px;
  padding-right: 40px;
  text-align: center;
}

.subheading {
  margin-top: 1px;
  line-height: 13px;
}

table {
  table-layout: fixed;
  width: calc(100% + 6px);
  margin: 1px 0 0 -6px;
  border: 3px double #000;
  border-collapse: separate;
  border-spacing: 0;
}

th,
td {
  box-sizing: border-box;
  padding: 0;
  height: 13px;
  font-weight: normal;
  line-height: 11px;
  vertical-align: top;
  border-top: 1px solid #000;
  border-left: 1px solid #000;
}

th:first-child,
td:first-child {
  text-align: center;
}

th {
  height: 26px;
  padding-bottom: 4px;
  line-height: 12px;
  vertical-align: middle;
}

thead tr:first-child th {
  border-top: 0;
}

thead tr:first-child th:first-child,
tbody tr:not(.total) td:first-child {
  border-left: 0;
}

.two-line {
  padding: 0;
  line-height: 11px;
  vertical-align: top;
}

.sub {
  height: 27px;
  padding: 0;
  white-space: pre-line;
}

small {
  font-size: 9px;
}

tbody tr:nth-child(3n) td {
  height: 12px;
}

.label {
  padding-left: 7px;
  white-space: nowrap;
}

tbody .last td {
  height: 12px;
}

tbody .total td {
  height: 9px;
  line-height: 8px;
}

.foot {
  display: flex;
  justify-content: space-between;
  padding: 24px 56px 0 0;
}

.sign p + p {
  margin-top: 5px;
}

.sign .name {
  padding-top: 47px;
  font-weight: bold;
}

.sign .nip {
  padding-top: 10px;
  font-weight: bold;
}

/* scroll bar */
.scroll {
  display: flex;
  flex-direction: column;
  width: 17px;
  background: #a4c3ee;
}

.ruler-toggle {
  height: 17px;
  border: 1px solid #8f9aae;
  background: #c7cdd8;
}

.track {
  flex: 1;
  display: flex;
  flex-direction: column;
  margin: 0 1px;
  background: linear-gradient(90deg, #6d8fbe, #86a7d6);
}

.step {
  height: 17px;
}

.track .step:first-child {
  margin-bottom: 18px;
}

.thumb {
  height: 414px;
  display: flex;
  align-items: center;
  justify-content: center;
  border: 1px solid #4c6595;
  border-radius: 2px;
  background: linear-gradient(90deg, #f4f7fb, #d4dce8 50%, #bccbe0);
}

.thumb i {
  width: 7px;
  height: 7px;
  background: repeating-linear-gradient(#6b7c9c 0 1px, transparent 1px 2px);
}

.track .step:last-child {
  margin-top: auto;
}

.browse {
  display: flex;
  flex-direction: column;
  height: 51px;
}

.browse button {
  flex: 1;
}

/* status bar */
.status {
  display: flex;
  flex: none;
  height: 24px;
  box-sizing: border-box;
  border-top: 1px solid #567db0;
  color: #15306b;
  background: linear-gradient(#e3effd, #cfe1f9 8px, #b1cdf3 9px, #c3daf8 17px, #d7e8fd);
}

.cell {
  display: flex;
  align-items: center;
  padding: 0 0 3px 8px;
}

.pages-count {
  padding: 0 7px 3px 16px;
  border-right: 1px solid #8fb1e0;
}

.words {
  padding: 0 7px 3px 9px;
  border-right: 1px solid #8fb1e0;
}

.proof {
  padding: 0 8px 3px 7px;
  border-right: 1px solid #8fb1e0;
}

.status-right {
  display: flex;
  align-items: center;
  margin-left: auto;
  padding: 0 5px 3px 6px;
  border-left: 1px solid #6d93cb;
  background: linear-gradient(#b2cdf2, #93b6e8 9px, #85abe2 10px, #a6c5ef);
}

.views {
  display: flex;
  border: 1px solid #6d93cb;
  border-radius: 2px;
  background: #bdd4f3;
}

.views button {
  width: 18px;
  height: 17px;
}

.views .active {
  background: linear-gradient(#f6d9a3, #f5b551 50%, #fbdf8e);
}

.percent {
  width: 43px;
}

.zoom-slider {
  appearance: none;
  width: 102px;
  height: 16px;
  margin: 0;
  background: linear-gradient(#5f7fb0, #5f7fb0) center / 100% 1px no-repeat;
}

.zoom-slider::-webkit-slider-thumb {
  appearance: none;
  width: 9px;
  height: 13px;
  border: 1px solid #5f7392;
  border-radius: 1px 1px 5px 5px;
  background: linear-gradient(90deg, #fff, #c5d3e8);
}

/* taskbar */
.taskbar {
  display: flex;
  flex: none;
  height: 38px;
  align-items: stretch;
  gap: 2px;
  background: linear-gradient(90deg, #8095b0, #8095b0 40px, #a6bfdb 60px);
  box-shadow: inset 0 1px #38485c;
}

.start {
  width: 57px;
  padding-right: 3px;
}

.task {
  box-sizing: border-box;
  width: 60px;
  border: 1px solid transparent;
  border-radius: 3px;
}

.task.open {
  border-color: #4d6079;
  background: linear-gradient(120deg, #d3dfec, #a9bfd9 60%, #bccde1);
  box-shadow: inset 0 0 0 1px #d9e4f1;
}

.task.current {
  background: linear-gradient(120deg, #eef4fa, #cddbeb 60%, #dde8f3);
}

.tray {
  display: flex;
  align-items: center;
  gap: 11px;
  margin-left: auto;
  padding-left: 50px;
  color: #fff;
  background: linear-gradient(90deg, transparent, #8295ac 45px);
}

.tray button {
  min-width: 12px;
}

.clock {
  width: 64px;
  padding-bottom: 2px;
  text-align: center;
  font-size: 12px;
  line-height: 17px;
}

.tray .show-desktop {
  width: 14px;
  height: 37px;
  margin: 1px 1px 0 -7px;
  box-sizing: border-box;
  border: 1px solid #46566a;
  background: linear-gradient(#8c9bae, #5d6e84 50%, #8e9cb0);
}
</style>
